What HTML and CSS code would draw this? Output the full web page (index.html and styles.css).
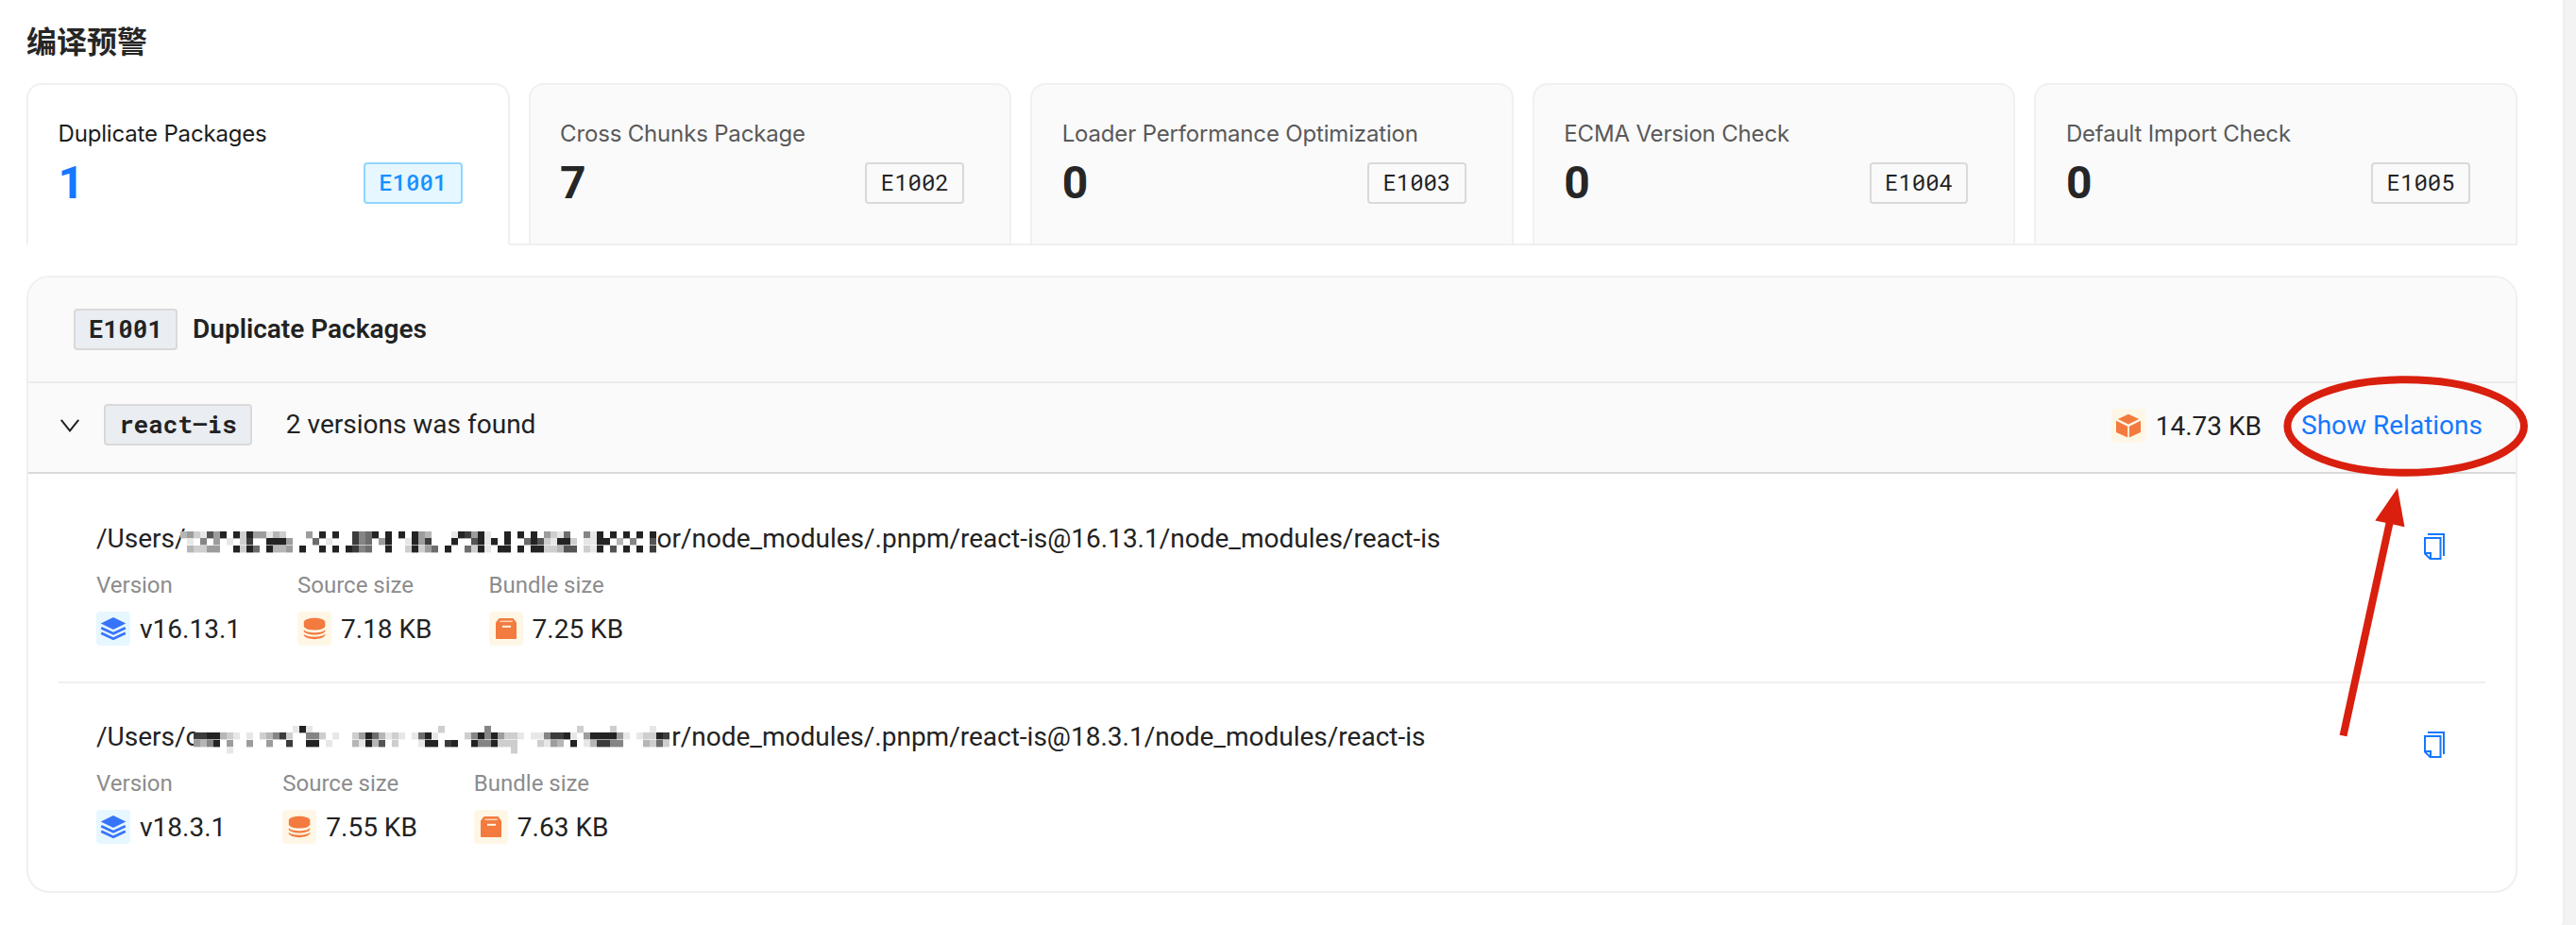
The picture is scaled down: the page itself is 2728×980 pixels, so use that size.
FILE: index.html
```html
<!DOCTYPE html>
<html lang="zh-CN">
<head>
<meta charset="utf-8">
<title>编译预警</title>
<link rel="stylesheet" href="styles.css">
</head>
<body>
<svg class="defs" aria-hidden="true">
  <symbol id="layers" viewBox="0 0 36 36">
    <path d="M18 6 31.3 12.6 18 19 4.7 12.6Z" fill="#3874f9"/>
    <path d="M5.2 17.2 18 23.2 30.8 17.2M5.2 22.7 18 28.7 30.8 22.7" fill="none" stroke="#3874f9" stroke-width="2.7"/>
  </symbol>
  <symbol id="disk" viewBox="0 0 36 36">
    <path d="M6.8 11.3C6.8 5.3 29.3 5.3 29.3 11.3V15.3C29.3 21 6.8 21 6.8 15.3Z" fill="#f37b3f"/>
    <path d="M6.8 19C9 23.3 27 23.3 29.3 19V21C27 25.6 9 25.6 6.8 21ZM6.8 23.6C9 27.8 27 27.8 29.3 23.6V25C27 30.5 9 30.5 6.8 25Z" fill="#f37b3f"/>
  </symbol>
  <symbol id="bag" viewBox="0 0 36 36">
    <path d="M10.6 7H25.4L29 11.6V28.2Q29 29 28.2 29H7.8Q7 29 7 28.2V11.6Z" fill="#f37b3f"/>
    <path d="M11.5 10.3H24.8" stroke="#fbd3b6" stroke-width="1.6"/>
    <path d="M14 15.8H23" stroke="#fff7e6" stroke-width="2"/>
  </symbol>
  <symbol id="cube" viewBox="0 0 36 36">
    <path d="M18 5.8 29.2 11 18 16.6 6.8 11ZM5 12.8 17.2 18.7V30.6L5 25ZM31 12.8V25L18.9 30.6V18.7Z" fill="#f37b3f"/>
  </symbol>
  <symbol id="copy" viewBox="0 0 22 28">
    <path d="M4 1H21V24M1 19V5H17.5V27H6.5L1 21.5ZM1.5 21H7V27" fill="none" stroke="#1677ff" stroke-width="2"/>
  </symbol>
</svg>

<main class="page">
  <h1 class="title">编译预警</h1>

  <div class="tabs">
    <section class="tab active"><div class="label">Duplicate Packages</div><div class="row"><b class="count">1</b><span class="tag">E1001</span></div></section>
    <section class="tab"><div class="label">Cross Chunks Package</div><div class="row"><b class="count">7</b><span class="tag">E1002</span></div></section>
    <section class="tab"><div class="label">Loader Performance Optimization</div><div class="row"><b class="count">0</b><span class="tag">E1003</span></div></section>
    <section class="tab"><div class="label">ECMA Version Check</div><div class="row"><b class="count">0</b><span class="tag">E1004</span></div></section>
    <section class="tab"><div class="label">Default Import Check</div><div class="row"><b class="count">0</b><span class="tag">E1005</span></div></section>
  </div>

  <div class="panel-wrap">
    <section class="panel">
      <header class="panel-head"><span class="tag strong">E1001</span><span class="panel-title">Duplicate Packages</span></header>
      <div class="item-head">
        <svg class="chevron" width="20" height="14" viewBox="0 0 20 14"><path d="M.8.8 10 12.4 19.2.8" fill="none" stroke="#222" stroke-width="2"/></svg>
        <span class="tag strong">react–is</span>
        <span class="found">2 versions was found</span>
        <div class="total"><span class="ico orange"><svg><use href="#cube"/></svg></span><span>14.73 KB</span></div>
        <a class="link">Show Relations</a>
      </div>
      <div class="entries">
        <article class="entry">
          <div class="info">
            <div class="path"><span>/Users/</span><svg class="mosaic first" data-mosaic="a" width="504" height="36"></svg><span>or/node_modules/.pnpm/react-is@16.13.1/node_modules/react-is</span></div>
            <div class="meta">
              <div class="cell"><div class="key">Version</div><div class="val"><span class="ico blue"><svg><use href="#layers"/></svg></span>v16.13.1</div></div>
              <div class="cell"><div class="key">Source size</div><div class="val"><span class="ico orange"><svg><use href="#disk"/></svg></span>7.18 KB</div></div>
              <div class="cell"><div class="key">Bundle size</div><div class="val"><span class="ico orange"><svg><use href="#bag"/></svg></span>7.25 KB</div></div>
            </div>
          </div>
          <svg class="copy"><use href="#copy"/></svg>
        </article>
        <article class="entry">
          <div class="info">
            <div class="path"><span>/Users/c</span><svg class="mosaic second" data-mosaic="b" width="508" height="36"></svg><span>r/node_modules/.pnpm/react-is@18.3.1/node_modules/react-is</span></div>
            <div class="meta">
              <div class="cell"><div class="key">Version</div><div class="val"><span class="ico blue"><svg><use href="#layers"/></svg></span>v18.3.1</div></div>
              <div class="cell"><div class="key">Source size</div><div class="val"><span class="ico orange"><svg><use href="#disk"/></svg></span>7.55 KB</div></div>
              <div class="cell"><div class="key">Bundle size</div><div class="val"><span class="ico orange"><svg><use href="#bag"/></svg></span>7.63 KB</div></div>
            </div>
          </div>
          <svg class="copy"><use href="#copy"/></svg>
        </article>
      </div>
    </section>
  </div>

  <svg class="callout" width="270" height="392" viewBox="2412 394 270 392">
    <ellipse cx="2547.7" cy="451.5" rx="125.3" ry="49.3" fill="none" stroke="#d91f0e" stroke-width="8"/>
    <path d="M2531 552 2481.5 779.5" stroke="#d91f0e" stroke-width="8"/>
    <path d="M2539 517 2546.5 558.3 2515.3 551.5Z" fill="#d91f0e"/>
  </svg>
</main>
<script src="mosaic.js"></script>
</body>
</html>
```
FILE: styles.css
```css
* { box-sizing: border-box; }
html, body { margin: 0; height: 100%; }
body { background: #f3f3f3; font-family: Roboto, "Noto Sans CJK SC", sans-serif; font-size: 28px; color: #222; white-space: nowrap; overflow: hidden; }
svg { display: block; flex: none; }
.defs { display: none; }

.page { position: relative; width: 2716px; height: 990px; padding: 18px 48px 0 28px; background: #fff; border: 0 solid #efefef; border-right-width: 2px; border-radius: 0 0 16px 0; }
.title { margin: 0 0 22px; font: 700 32px/48px "Noto Sans CJK SC", sans-serif; color: #262626; }

.tabs { display: grid; grid-template-columns: repeat(5, 1fr); gap: 20px; width: 2638px; height: 172px; box-shadow: inset 0 -2px #f0f0f0; }
.tab { padding: 38px 48px 0 31.5px; border: 2px solid #f0f0f0; border-radius: 16px 16px 0 0; background: #fafafa; }
.tab.active { background: #fff; border-bottom-color: #fff; }
.label { font: 400 24px/28px Inter, sans-serif; letter-spacing: -.17px; color: #595959; }
.active .label { color: #1c1c1c; }
.row { display: flex; align-items: center; justify-content: space-between; height: 44px; margin-top: 16px; }
.count { font-size: 48px; line-height: 44px; font-weight: 700; color: #262626; }
.active .count { color: #1677ff; }
.tag { display: block; height: 44px; padding: 0 14.4px; border: 2px solid #d9d9d9; border-radius: 4px; background: #fafafa; font: 400 24px/38px "Roboto Mono", "DejaVu Sans Mono", monospace; color: #222; }
.active .tag { color: #1890ff; border-color: #91d5ff; background: #e6f7ff; font-weight: 500; }
.tag.strong { padding: 0 14px; background: #eaedf1; font-size: 26px; font-weight: 700; }

.panel-wrap { width: 2638px; margin-top: 32px; }
.panel { border: 2px solid #f0f0f0; border-radius: 24px; overflow: hidden; background: #fff; }
.panel-head { display: flex; align-items: center; gap: 16px; height: 112px; padding-left: 48px; background: #fafafa; border-bottom: 2px solid #ebebeb; }
.panel-title { margin-top: -2px; font-weight: 600; }
.item-head { display: flex; align-items: center; height: 96px; padding: 0 35px 6px 34px; background: #fafafa; border-bottom: 2px solid #d9d9d9; }
.chevron { margin: 2px 26px 0 0; }
.found { margin: -2px 0 0 36px; }
.total { display: flex; align-items: center; gap: 11px; margin: 2px 42px 0 auto; }
.link { margin-top: 1px; color: #1677ff; }
.ico { width: 36px; height: 36px; border-radius: 4px; }
.ico svg { width: 36px; height: 36px; }
.orange { background: #fff7e6; }
.blue { background: #e6f7ff; }

.entries { padding: 12px 32px; }
.entry { display: flex; justify-content: space-between; padding: 35px 43px 38px 40px; }
.entry + .entry { border-top: 2px solid #f0f0f0; }
.path { display: flex; align-items: center; height: 44px; line-height: 44px; }
.mosaic.first { margin: 0 1px 0 -6px; }
.mosaic.second { position: relative; margin: 0 -2px 0 -6px; }
.meta { display: flex; gap: 60px; margin-top: 13px; }
.key { font-size: 24px; line-height: 28px; color: #8c8c8c; }
.val { display: flex; align-items: center; gap: 10px; height: 36px; margin-top: 14px; }
.copy { width: 22px; height: 28px; margin-top: 16px; }
.callout { position: absolute; left: 2412px; top: 394px; }
```
FILE: mosaic.js
```js
// Pixelated cover over the private part of each path; digits are darkness levels.
const mosaics = {
  a: { y: 10, rows: [
    '342174909294413200040909008569090909430001984910090909042160051909090909',
    '010504010280099940006010008560490019480009007919090069721992011990305007',
    '032244009296093340900909098560090029246090062910990909922377021907090908'
  ] },
  b: { y: 6, rows: [
    '000000000000000191000000000000000000020000005000000000000020000200000100',
    '889932101023582005520100249631210169100002595942210115889104999941012298',
    '435904004004008009901000319370200019908900955922200021430901388550003262',
    '000001000000000000000000000000000000000000000000200000000000000000000000'
  ] }
};

for (const svg of document.querySelectorAll('[data-mosaic]')) {
  const { y, rows } = mosaics[svg.dataset.mosaic];
  rows.forEach((row, r) => [...row].forEach((level, c) => {
    if (level === '0') return;
    const rect = document.createElementNS('http://www.w3.org/2000/svg', 'rect');
    const shade = Math.round(255 - level * 24.4);
    rect.setAttribute('x', c * 7);
    rect.setAttribute('y', y + Math.round(r * 7.33));
    rect.setAttribute('width', 7);
    rect.setAttribute('height', 7.4);
    rect.setAttribute('fill', `rgb(${shade},${shade},${shade})`);
    svg.append(rect);
  }));
}
```
